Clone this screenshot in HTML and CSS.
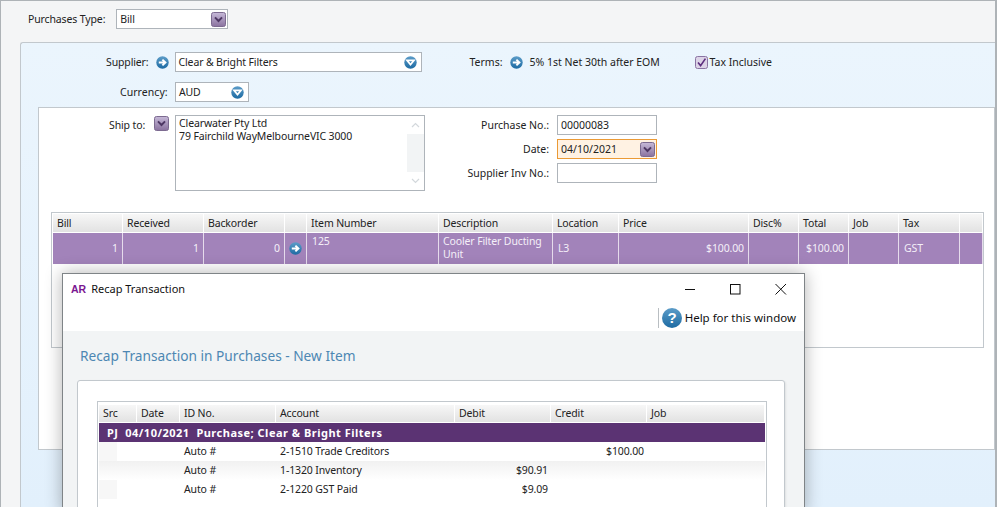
FILE: index.html
```html
<!DOCTYPE html>
<html lang="en">
<head>
<meta charset="utf-8">
<title>Purchases</title>
<link rel="stylesheet" href="styles.css">
</head>
<body>
<svg class="defs" width="0" height="0" aria-hidden="true">
  <defs>
    <linearGradient id="gBlue" x1="0" y1="0" x2="0" y2="1"><stop offset="0" stop-color="#5c9cc8"/><stop offset="1" stop-color="#1d6ba3"/></linearGradient>
    <linearGradient id="gPurple" x1="0" y1="0" x2="0" y2="1"><stop offset="0" stop-color="#c6b9d8"/><stop offset="1" stop-color="#8a729f"/></linearGradient>
    <symbol id="go" viewBox="0 0 13 13"><circle cx="6.5" cy="6.5" r="6.2" fill="url(#gBlue)"/><path d="M2.8 6.5H9M6.4 3.6 9.4 6.5 6.4 9.4" fill="none" stroke="#fff" stroke-width="2"/></symbol>
    <symbol id="down" viewBox="0 0 13 13"><circle cx="6.5" cy="6.5" r="6.2" fill="url(#gBlue)"/><path d="M3 4.3H10L6.5 8.6Z" fill="none" stroke="#fff" stroke-width="1.7"/></symbol>
    <symbol id="drop" viewBox="0 0 15 15"><rect x=".5" y=".5" width="14" height="14" rx="2" fill="url(#gPurple)" stroke="#7c6a90"/><path d="M4 5.4 7.5 9 11 5.4" fill="none" stroke="#4d3763" stroke-width="2"/></symbol>
  </defs>
</svg>

<main class="page">
  <div class="type-row">
    <span class="label">Purchases Type:</span>
    <div class="field type-field"><span>Bill</span><svg class="ic15"><use href="#drop"/></svg></div>
  </div>

  <section class="blue">
    <div class="top-row">
      <span class="label supplier-label">Supplier:</span>
      <svg class="ic13 supplier-go"><use href="#go"/></svg>
      <div class="field supplier-field"><span>Clear &amp; Bright Filters</span><svg class="ic13"><use href="#down"/></svg></div>
      <span class="label terms-label">Terms:</span>
      <svg class="ic13 terms-go"><use href="#go"/></svg>
      <span class="terms">5% 1st Net 30th after EOM</span>
      <svg class="ic13 check" viewBox="0 0 13 13"><rect x=".5" y=".5" width="12" height="12" rx="2" fill="#dcd3e7" stroke="#8a74a3"/><path d="M3 6.5 5.6 9.6 10.4 2.6" fill="none" stroke="#5b2d7e" stroke-width="1.6"/></svg>
      <span class="label tax">Tax Inclusive</span>
    </div>
    <div class="currency-row">
      <span class="label currency-label">Currency:</span>
      <div class="field currency-field"><span>AUD</span><svg class="ic13"><use href="#down"/></svg></div>
    </div>

    <div class="white">
      <div class="ship-row">
        <span class="label ship-label">Ship to:</span>
        <svg class="ic15 ship-btn"><use href="#drop"/></svg>
        <div class="address">
          <div class="address-text">Clearwater Pty Ltd<br>79 Fairchild WayMelbourneVIC 3000</div>
          <div class="scroll">
            <svg class="chev" viewBox="0 0 9 6"><path d="M1 5 4.5 1.5 8 5" fill="none" stroke="#d3d8dc" stroke-width="1.2"/></svg>
            <div class="scroll-track"></div>
            <svg class="chev" viewBox="0 0 9 6"><path d="M1 1 4.5 4.5 8 1" fill="none" stroke="#d3d8dc" stroke-width="1.2"/></svg>
          </div>
        </div>
        <div class="meta">
          <span class="label">Purchase No.:</span><div class="field meta-field">00000083</div>
          <span class="label">Date:</span><div class="field meta-field focus"><span>04/10/2021</span><svg class="ic15"><use href="#drop"/></svg></div>
          <span class="label">Supplier Inv No.:</span><div class="field meta-field"></div>
        </div>
      </div>

      <div class="lines">
        <div class="lines-head">
          <span>Bill</span><span>Received</span><span>Backorder</span><span></span><span>Item Number</span><span>Description</span><span>Location</span><span>Price</span><span>Disc%</span><span>Total</span><span>Job</span><span>Tax</span><span></span>
        </div>
        <div class="lines-row">
          <span class="num mid">1</span><span class="num mid">1</span><span class="num mid">0</span><span class="mid center"><svg class="ic13"><use href="#go"/></svg></span><span>125</span><span class="desc">Cooler Filter Ducting Unit</span><span class="mid">L3</span><span class="num mid">$100.00</span><span></span><span class="num mid">$100.00</span><span></span><span class="mid">GST</span><span></span>
        </div>
      </div>
    </div>
  </section>

  <section class="modal">
    <header class="titlebar">
      <span class="logo">AR</span>
      <span class="title">Recap Transaction</span>
      <div class="winbtns">
        <svg class="win" viewBox="0 0 12 12"><path d="M0 6.5H10" stroke="#111" fill="none"/></svg>
        <svg class="win" viewBox="0 0 12 12"><rect x=".5" y="1.5" width="9.5" height="9.5" stroke="#111" fill="none"/></svg>
        <svg class="win" viewBox="0 0 12 12"><path d="M.5 1 11 11.5M11 1 .5 11.5" stroke="#111" fill="none"/></svg>
      </div>
    </header>
    <div class="helpbar">
      <div class="help">
        <svg class="help-ic" viewBox="0 0 20 20"><circle cx="10" cy="10" r="10" fill="url(#gBlue)"/><text x="10" y="15" text-anchor="middle" class="help-q">?</text></svg>
        <span>Help for this window</span>
      </div>
    </div>
    <div class="modal-body">
      <h1 class="recap-title">Recap Transaction in Purchases - New Item</h1>
      <div class="card">
        <div class="recap">
          <div class="recap-head"><span>Src</span><span>Date</span><span>ID No.</span><span>Account</span><span>Debit</span><span>Credit</span><span>Job</span></div>
          <div class="recap-group">PJ&nbsp; 04/10/2021&nbsp; Purchase; Clear &amp; Bright Filters</div>
          <div class="recap-row"><span></span><span></span><span>Auto #</span><span>2-1510 Trade Creditors</span><span></span><span class="num">$100.00</span><span></span></div>
          <div class="recap-row alt"><span></span><span></span><span>Auto #</span><span>1-1320 Inventory</span><span class="num">$90.91</span><span></span><span></span></div>
          <div class="recap-row"><span></span><span></span><span>Auto #</span><span>2-1220 GST Paid</span><span class="num">$9.09</span><span></span><span></span></div>
        </div>
      </div>
    </div>
  </section>
</main>
</body>
</html>
```

FILE: styles.css
```css
* { box-sizing: border-box; }
html, body { margin: 0; padding: 0; }
body { width: 997px; height: 507px; overflow: hidden; font: 10.5px/14px "Noto Sans", "DejaVu Sans", sans-serif; letter-spacing: -.13px; color: #222; background: #fff; }
.defs { position: absolute; }
.page { position: relative; width: 997px; height: 507px; overflow: hidden; background: #f4f5f6; border: 1px solid #aeb3b7; border-width: 1px 2px 0 1px; }
.label { white-space: nowrap; }
.ic13 { width: 13px; height: 13px; flex: none; display: block; }
.ic15 { width: 15px; height: 15px; flex: none; display: block; }
.field { display: flex; align-items: center; justify-content: space-between; background: #fff; border: 1px solid #aeb4ba; padding: 0 3px; white-space: nowrap; }

.type-row { display: flex; align-items: center; height: 22px; margin: 7px 0 12px 27px; gap: 11px; }
.type-field { width: 112px; height: 20px; padding-right: 1px; }

.blue { margin-left: 19px; height: 466px; background: linear-gradient(180deg, #ebf5fd 0%, #e2f0fc 100%); border: 1px solid #c2c8cd; border-width: 1px 0 0 1px; border-radius: 3px 0 0 0; padding-top: 9px; }
.top-row { display: flex; align-items: center; height: 20px; }
.supplier-label { margin-left: 85px; }
.supplier-go { margin-left: 7px; }
.supplier-field { width: 247px; height: 20px; margin-left: 6px; padding-right: 4px; }
.terms-label { margin-left: 48px; letter-spacing: 0; }
.terms-go { margin-left: 7px; }
.terms { margin-left: 7px; white-space: nowrap; width: 165px; letter-spacing: 0; }
.tax { margin-left: 2px; letter-spacing: 0; }
.currency-row { display: flex; align-items: center; height: 20px; margin-top: 10px; }
.currency-label { margin-left: 99px; width: 48px; letter-spacing: .05px; }
.currency-field { width: 74px; height: 20px; margin-left: 7px; padding-right: 4px; }

.white { margin: 5px 0 0 17px; width: 957px; height: 343px; background: #fff; border: 1px solid #c2c8cd; padding-top: 7px; }
.ship-row { display: flex; align-items: flex-start; height: 89px; }
.ship-label { margin: 3px 0 0 70px; }
.ship-btn { margin: 1px 0 0 9px; }
.address { display: flex; width: 250px; height: 76px; margin-left: 6px; border: 1px solid #aeb4ba; background: #fff; }
.address-text { flex: 1; padding: 1px 3px; line-height: 13px; }
.scroll { display: flex; flex-direction: column; width: 17px; }
.chev { width: 9px; height: 6px; margin: 6px auto; display: block; flex: none; }
.scroll-track { flex: 1; background: #f2f4f5; }
.meta { display: grid; grid-template-columns: 89px 100px; row-gap: 4px; column-gap: 8px; margin-left: 35px; justify-items: end; align-items: center; letter-spacing: 0; }
.meta-field { width: 100px; height: 20px; }
.focus { background: #fff2e3; border-color: #eb9a35; padding-right: 1px; }

.lines { margin: 8px 0 0 12px; width: 933px; height: 136px; border: 1px solid #c2c8cd; padding: 1px; }
.lines-head, .lines-row { display: grid; grid-template-columns: 70px 81px 81px 22px 132px 114px 66px 130px 50px 50px 50px 61px 23px; }
.lines-head { height: 19px; }
.lines-head span { background: linear-gradient(180deg, #f7f7f7, #e2e2e2); border-right: 1px solid #fff; border-bottom: 1px solid #fff; padding: 1px 0 0 4px; line-height: 16px; }
.lines-row { height: 31px; background: #a283ba; color: #f4eff8; }
.lines-row span { border-right: 1px solid #e6dcec; padding: 2px 4px 0 5px; line-height: 13px; }
.lines-row .desc { padding-left: 4px; }
.lines-row .mid { display: flex; align-items: center; padding-top: 0; }
.lines-row .num { justify-content: flex-end; }
.lines-row .center { justify-content: center; padding: 0; }

.modal { position: absolute; left: 61px; top: 272px; width: 743px; height: 240px; background: #f2f4f5; border: 1px solid #7f8487; box-shadow: 0 0 16px rgba(0, 0, 0, .3); }
.titlebar { display: flex; align-items: center; height: 29px; background: #fff; padding-left: 8px; }
.logo { font: 700 10.5px/14px "Liberation Sans", sans-serif; letter-spacing: 0; color: #7b1791; }
.title { margin-left: 5px; font-size: 11px; letter-spacing: 0; color: #111; }
.winbtns { display: flex; margin-left: auto; gap: 33px; padding-right: 17px; }
.win { width: 12px; height: 12px; display: block; }
.helpbar { display: flex; justify-content: flex-end; height: 28px; padding-top: 5px; background: #fff; }
.help { display: flex; align-items: center; gap: 3px; height: 20px; padding: 0 8px 0 3px; border-left: 1px solid #b9bec2; font-size: 11.5px; letter-spacing: 0; color: #111; }
.help-ic { width: 20px; height: 20px; display: block; }
.help-q { font: 700 15px "Liberation Sans", sans-serif; fill: #fff; }
.modal-body { padding: 17px 19px 0 14px; }
.recap-title { margin: 0; font: 400 13.7px/16px "Noto Sans", sans-serif; letter-spacing: 0; color: #4d87b3; padding-left: 3px; }
.card { margin-top: 16px; height: 160px; background: #fff; border: 1px solid #c2c8cd; border-radius: 3px; padding: 20px 0 0 19px; box-shadow: 1px 1px 2px rgba(0, 0, 0, .08); }
.recap { border: 1px solid #c2c8cd; border-bottom: 0; padding: 3px 1px 0; height: 140px; width: 670px; }
.recap-head, .recap-row { display: grid; grid-template-columns: 38px 43px 96px 179px 96px 96px 118px; }
.recap-head { height: 18px; }
.recap-head span { background: linear-gradient(180deg, #f7f7f7, #e2e2e2); border-right: 1px solid #fff; border-bottom: 1px solid #fff; padding-left: 4px; line-height: 16px; }
.recap-group { height: 19px; background: #5b3373; color: #fff; font: 700 11px/19px "Noto Sans", sans-serif; letter-spacing: .5px; padding-left: 8px; white-space: pre; }
.recap-row { height: 19px; line-height: 19px; background: linear-gradient(90deg, #f7f7f7 18px, #fff 18px); }
.recap-row span { padding-left: 4px; white-space: nowrap; }
.recap-row .num { text-align: right; padding: 0 3px 0 0; }
.recap-row.alt { background: linear-gradient(180deg, #f1f1f1, #fff); }
```
